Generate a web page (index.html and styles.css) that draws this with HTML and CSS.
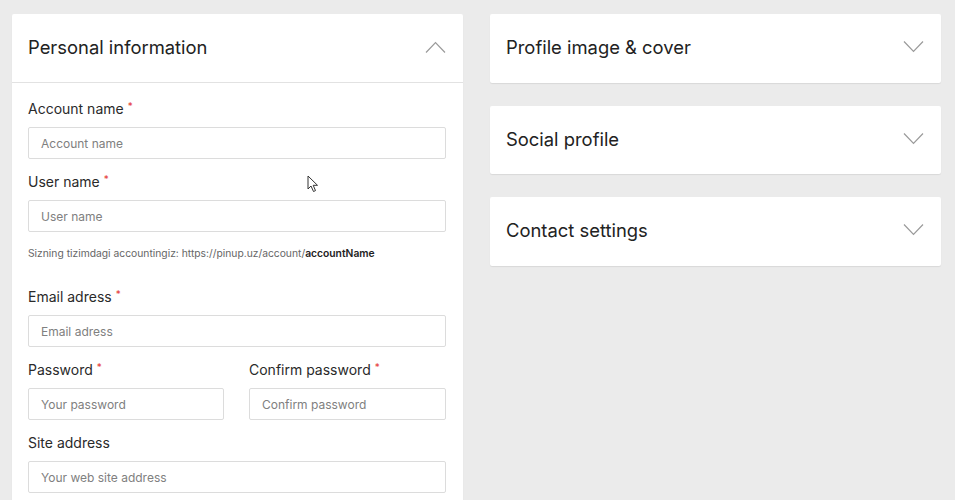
FILE: index.html
```html
<!DOCTYPE html>
<html>
<head>
<meta charset="utf-8">
<link rel="stylesheet" href="styles.css">
</head>
<body>
<div class="page">
  <div class="col">
    <section class="card">
      <div class="card-head open">
        <h2>Personal information</h2>
        <svg class="chev" width="21" height="12" viewBox="0 0 21 12"><path d="M1 11.5 L10.5 1.5 L20 11.5" fill="none" stroke="#9a9a9a" stroke-width="1.2"/></svg>
      </div>
      <div class="card-body">
        <div class="field">
          <label>Account name<span class="req">*</span></label>
          <div class="input">Account name</div>
        </div>
        <div class="field">
          <label>User name<span class="req">*</span></label>
          <div class="input">User name</div>
          <p class="help">Sizning tizimdagi accountingiz: https://pinup.uz/account/<b>accountName</b></p>
        </div>
        <div class="field email">
          <label>Email adress<span class="req">*</span></label>
          <div class="input">Email adress</div>
        </div>
        <div class="row">
          <div class="field">
            <label>Password<span class="req">*</span></label>
            <div class="input">Your password</div>
          </div>
          <div class="field">
            <label>Confirm password<span class="req">*</span></label>
            <div class="input">Confirm password</div>
          </div>
        </div>
        <div class="field">
          <label>Site address</label>
          <div class="input">Your web site address</div>
        </div>
      </div>
      <svg class="cursor" width="12" height="18" viewBox="0 0 12 18"><path d="M1 1 L1 14 L4 11 L6.5 16.5 L8.5 15.6 L6.2 10.3 L10.5 10.3 Z" fill="#fff" stroke="#333" stroke-width="1"/></svg>
    </section>
  </div>
  <div class="col right">
    <section class="card">
      <div class="card-head">
        <h2>Profile image &amp; cover</h2>
        <svg class="chev" width="21" height="12" viewBox="0 0 21 12"><path d="M1 0.5 L10.5 10.5 L20 0.5" fill="none" stroke="#9a9a9a" stroke-width="1.2"/></svg>
      </div>
    </section>
    <section class="card">
      <div class="card-head">
        <h2>Social profile</h2>
        <svg class="chev" width="21" height="12" viewBox="0 0 21 12"><path d="M1 0.5 L10.5 10.5 L20 0.5" fill="none" stroke="#9a9a9a" stroke-width="1.2"/></svg>
      </div>
    </section>
    <section class="card">
      <div class="card-head">
        <h2>Contact settings</h2>
        <svg class="chev" width="21" height="12" viewBox="0 0 21 12"><path d="M1 0.5 L10.5 10.5 L20 0.5" fill="none" stroke="#9a9a9a" stroke-width="1.2"/></svg>
      </div>
    </section>
  </div>
</div>
</body>
</html>
```
FILE: styles.css
```css
html, body {
  margin: 0;
  padding: 0;
  background: #ebebeb;
  font-family: Inter, "Noto Sans", sans-serif;
  color: #222;
}
body {
  height: 500px;
  overflow: hidden;
}
.page {
  display: grid;
  grid-template-columns: 451px 451px;
  column-gap: 27px;
  align-items: start;
  padding: 14px 0 0 12px;
}
.col {
  display: flex;
  flex-direction: column;
  gap: 23px;
}
.card {
  background: #fff;
  border-radius: 2px;
  box-shadow: 0 1px 1px rgba(0,0,0,0.08);
  position: relative;
}
.card-head {
  height: 68px;
  display: flex;
  align-items: center;
  justify-content: space-between;
  padding: 0 17px 2px 16px;
  box-sizing: border-box;
}
.right .card-head {
  height: 68.5px;
}
.card-head.open {
  border-bottom: 1px solid #e2e2e2;
  height: 69px;
}
.card-head h2 {
  margin: 0;
  font-size: 18.4px;
  font-weight: 400;
  color: #222;
}
.card-body {
  padding: 17px 17px 24px 16px;
  display: flex;
  flex-direction: column;
  gap: 14px;
}
.field {
  display: flex;
  flex-direction: column;
}
.field label {
  font-size: 14px;
  line-height: 18px;
  color: #2a2a2a;
  margin-bottom: 9px;
}
.req {
  color: #e53935;
  font-size: 10px;
  vertical-align: top;
  position: relative;
  top: -3px;
  margin-left: 4px;
}
.input {
  height: 32px;
  box-sizing: border-box;
  border: 1px solid #dcdcdc;
  border-radius: 2px;
  padding: 0 12px;
  display: flex;
  align-items: center;
  font-size: 12px;
  color: #808080;
}
.help {
  margin: 14px 0 0 0;
  font-size: 10.3px;
  line-height: 14px;
  color: #666;
}
.help b {
  color: #222;
  font-weight: 600;
}
.field.email {
  margin-top: 14px;
}
.row {
  display: grid;
  grid-template-columns: 196px 197px;
  column-gap: 25px;
}
.cursor {
  position: absolute;
  left: 295px;
  top: 161px;
}
```
